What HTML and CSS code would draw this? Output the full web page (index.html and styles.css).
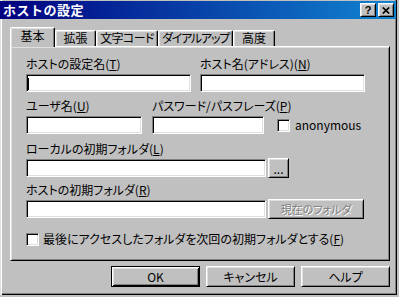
FILE: index.html
```html
<!DOCTYPE html>
<html lang="ja">
<head>
<meta charset="UTF-8">
<title>ホストの設定</title>
<link rel="stylesheet" href="styles.css">
</head>
<body>

<div class="window">
  <div class="titlebar">
    <span class="title">ホストの設定</span>
    <div class="caption-btns">
      <button class="cap-btn cap-help">?</button>
      <button class="cap-btn">
        <svg width="8" height="7" viewBox="0 0 8 7"><path d="M0.8 0.5 L7.2 6.5 M7.2 0.5 L0.8 6.5" stroke="#000" stroke-width="1.7"/></svg>
      </button>
    </div>
  </div>

  <div class="tabs">
    <div class="tab tab-kihon active">基本</div>
    <div class="tab tab-kakucho">拡張</div>
    <div class="tab tab-moji">文字コード</div>
    <div class="tab tab-dialup">ダイアルアップ</div>
    <div class="tab tab-kodo">高度</div>
  </div>

  <div class="panel">
    <!-- host name / address -->
    <div class="row row-host">
      <div class="field w-half">
        <label>ホストの設定名(<u>T</u>)</label>
        <div class="edit"><span class="caret"></span></div>
      </div>
      <div class="field w-half">
        <label>ホスト名(アドレス)(<u>N</u>)</label>
        <div class="edit"></div>
      </div>
    </div>

    <!-- user / password -->
    <div class="row row-user">
      <div class="field w-user">
        <label>ユーザ名(<u>U</u>)</label>
        <div class="edit"></div>
      </div>
      <div class="field w-pass">
        <label>パスワード/パスフレーズ(<u>P</u>)</label>
        <div class="edit"></div>
      </div>
      <div class="anon-group">
        <span class="check"></span>
        <span class="anon-text">anonymous</span>
      </div>
    </div>

    <!-- local folder -->
    <div class="row row-local">
      <div class="field">
        <label>ローカルの初期フォルダ(<u>L</u>)</label>
        <div class="path-line">
          <div class="edit w-path"></div>
          <button class="btn btn-small btn-browse">...</button>
        </div>
      </div>
    </div>

    <!-- host folder -->
    <div class="row row-remote">
      <div class="field">
        <label>ホストの初期フォルダ(<u>R</u>)</label>
        <div class="path-line">
          <div class="edit w-path"></div>
          <button class="btn btn-small btn-current" disabled>現在のフォルダ</button>
        </div>
      </div>
    </div>

    <div class="row row-last">
      <span class="check"></span>
      <span class="check-text">最後にアクセスしたフォルダを次回の初期フォルダとする(<u>F</u>)</span>
    </div>
  </div>

  <div class="buttons">
    <button class="btn btn-dialog btn-default">OK</button>
    <button class="btn btn-dialog">キャンセル</button>
    <button class="btn btn-dialog">ヘルプ</button>
  </div>
</div>

</body>
</html>
```

FILE: styles.css
```css
body {
  margin: 0;
  background-color: #c0c0c0;
  font-family: "Noto Sans CJK JP", "Noto Sans", sans-serif;
  font-size: 12px;
  line-height: 14px;
  font-feature-settings: "palt";
  color: #000;
}
.window {
  width: 397px;
  height: 295px;
  box-sizing: border-box;
  padding-top: 1px;
  background-color: #c0c0c0;
  box-shadow: inset 1px 0 #dfdfdf, inset 2px 0 #fff, inset -1px -1px #000, inset -2px -2px #808080;
}
.titlebar {
  height: 18px;
  margin-right: 1px;
  padding: 0 2px 0 3px;
  display: flex;
  align-items: center;
  justify-content: space-between;
  background: linear-gradient(to right, #000080, #1084d0);
  color: #fff;
}
.title {
  font-weight: bold;
  font-size: 13px;
  letter-spacing: 0.5px;
  font-feature-settings: normal;
}
.caption-btns {
  display: flex;
  gap: 2px;
}
.cap-btn {
  width: 16px;
  height: 14px;
  padding: 0;
  box-sizing: border-box;
  display: flex;
  align-items: center;
  justify-content: center;
  background-color: #c0c0c0;
  border: 1px solid;
  border-color: #fff #000 #000 #fff;
  box-shadow: inset 1px 1px #dfdfdf, inset -1px -1px #808080;
}
.cap-help {
  font-family: "Liberation Sans", Arial, sans-serif;
  font-weight: bold;
  font-size: 11px;
  line-height: 1;
  color: #000;
}

/* tabs */
.tabs {
  display: flex;
  align-items: flex-end;
  height: 19px;
  padding: 8px 0 0 10px;
}
.tab {
  height: 16px;
  box-sizing: border-box;
  text-align: center;
  white-space: nowrap;
  border: 1px solid;
  border-color: #fff #000 transparent #fff;
  border-bottom: none;
  border-radius: 2px 2px 0 0;
  box-shadow: inset -1px 0 #808080, inset 1px 1px #dfdfdf;
  background-color: #c0c0c0;
}
.tab.active {
  height: 20px;
  padding-top: 1px;
  margin-bottom: -1px;
  position: relative;
  z-index: 1;
}
.tab-kihon { width: 45px; }
.tab-kakucho { width: 41px; }
.tab-moji { width: 62px; letter-spacing: -0.6px; }
.tab-dialup { width: 75px; letter-spacing: -1.2px; }
.tab-kodo { width: 42px; }

/* page */
.panel {
  width: 380px;
  height: 215px;
  margin-left: 10px;
  box-sizing: border-box;
  padding: 10px 0 0 15px;
  border: 1px solid;
  border-color: #fff #000 #000 #fff;
  box-shadow: inset 1px 1px #dfdfdf, inset -1px -1px #808080;
}
.row {
  display: flex;
  align-items: flex-end;
}
.row-user { margin-top: 7px; }
.row-local { margin-top: 8px; }
.row-remote { margin-top: 6px; }
.row-last {
  margin-top: 14px;
  align-items: center;
  gap: 4px;
}
.field label {
  display: block;
  margin-bottom: 3px;
  white-space: nowrap;
}
.w-half { width: 165px; }
.w-half + .w-half { margin-left: 9px; }
.w-user { width: 116px; }
.w-pass { width: 112px; margin-left: 10px; }
.w-path { width: 240px; }
.edit {
  height: 18px;
  box-sizing: border-box;
  background-color: #fff;
  border: 1px solid;
  border-color: #808080 #fff #fff #808080;
  box-shadow: inset 1px 1px #000, inset -1px -1px #dfdfdf;
}
.caret {
  display: block;
  width: 1px;
  height: 12px;
  margin: 3px 0 0 1px;
  background-color: #000;
}
.check {
  width: 13px;
  height: 13px;
  flex: none;
  box-sizing: border-box;
  background-color: #fff;
  border: 1px solid;
  border-color: #808080 #fff #fff #808080;
  box-shadow: inset 1px 1px #000, inset -1px -1px #dfdfdf;
}
.anon-group {
  display: flex;
  align-items: center;
  height: 18px;
  margin-left: 13px;
  gap: 5px;
}
.anon-text {
  font-size: 12px;
}
.check-text {
  white-space: nowrap;
}
.path-line {
  display: flex;
  align-items: center;
  gap: 2px;
}

/* buttons */
.btn {
  font-family: inherit;
  font-size: 12px;
  font-feature-settings: "palt";
  padding: 0;
  box-sizing: border-box;
  color: #000;
  background-color: #c0c0c0;
  border: 1px solid;
  border-color: #fff #000 #000 #fff;
  box-shadow: inset 1px 1px #dfdfdf, inset -1px -1px #808080;
}
.btn-small {
  height: 20px;
  margin: -1px 0;
}
.btn-browse {
  width: 21px;
  line-height: 20px;
}
.btn-current {
  width: 96px;
  font-size: 11px;
  color: #808080;
  text-shadow: 1px 1px #fff;
}
.buttons {
  display: flex;
  justify-content: flex-end;
  gap: 6px;
  margin-top: 5px;
  padding-right: 7px;
}
.btn-dialog {
  width: 89px;
  height: 21px;
}
.btn-default {
  border-color: #000;
  box-shadow: inset 1px 1px #fff, inset -1px -1px #000, inset 2px 2px #dfdfdf, inset -2px -2px #808080;
}
```
